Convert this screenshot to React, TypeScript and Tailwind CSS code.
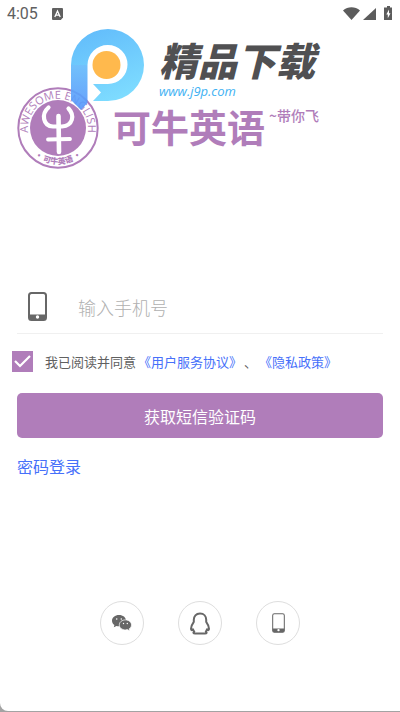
import { useState } from "react";

const PURPLE = "#b07dba";

function StatusBar() {
  return (
    <header className="flex h-7 items-center justify-between px-[7px] text-[#606060]">
      <div className="flex items-center gap-[14px]">
        <span className="font-[Roboto,sans-serif] text-[16px] leading-7">4:05</span>
        <svg width="11" height="12" viewBox="0 0 11 12" aria-hidden="true">
          <path d="M1 0h9A1 1 0 0 1 11 1V9.500L8.800 12H1A1 1 0 0 1 0 11V1A1 1 0 0 1 1 0z" fill="#606060" />
          <path d="M2.800 9 5.500 3l2.700 6M4 7.200h3" fill="none" stroke="#fff" strokeWidth="1.300" />
        </svg>
      </div>
      <svg width="50" height="16" viewBox="0 0 50 16" fill="#5c5c5c" aria-hidden="true">
        <path d="M0 4.500C5 .3 12 .3 17 4.500L8.500 14z" />
        <path d="M33 2v12H20z" />
        <path d="M44 0h3v1.500h2V14h-8V1.500h3z" />
        <path d="M46 3.500 43.300 8.500h1.500v3.800l2.700-5h-1.500z" fill="#fff" />
      </svg>
    </header>
  );
}

function Badge() {
  return (
    <svg width="82" height="82" viewBox="0 0 82 82" aria-hidden="true">
      <defs>
        <path id="badge-top" d="M12.500 51A30 30 0 1 1 69.500 51" />
        <path id="badge-bottom" d="M18 69A36.200 36.200 0 0 0 64 69" />
      </defs>
      <circle cx="41" cy="41" r="39.700" fill="#fff" stroke={PURPLE} strokeWidth="2" />
      <circle cx="41" cy="41" r="28" fill={PURPLE} />
      <text fill={PURPLE} fontSize="11" fontWeight="500" className="font-['Open_Sans',sans-serif]">
        <textPath href="#badge-top" startOffset="50%" textAnchor="middle">AWESOME ENGLISH</textPath>
      </text>
      <text fill={PURPLE} fontSize="8" fontWeight="900" className="font-['Noto_Sans_CJK_SC',sans-serif]">
        <textPath href="#badge-bottom" startOffset="50%" textAnchor="middle">· 可牛英语 ·</textPath>
      </text>
      <g fill="none" stroke="#fff" strokeLinecap="round" strokeLinejoin="round">
        <path d="M31.500 20.500C24 27 26 39 36 39.500h9c11-1 13-11 6.500-18" strokeWidth="4.200" />
        <path d="M41.500 29 42 65" strokeWidth="4.600" />
        <path d="M31 52.500 53 52" strokeWidth="3.800" />
      </g>
    </svg>
  );
}

function Watermark() {
  return (
    <div className="pointer-events-none absolute left-[71px] top-px flex gap-[14px]">
      <svg width="74" height="83" viewBox="0 0 74 83" aria-hidden="true">
        <defs>
          <linearGradient id="loop" x1="0.200" y1="0" x2="0.600" y2="1">
            <stop offset="0" stopColor="#62bcfb" />
            <stop offset="1" stopColor="#7edcff" />
          </linearGradient>
          <linearGradient id="stem" x1="0" y1="0" x2="0" y2="1">
            <stop offset="0" stopColor="#62bafb" />
            <stop offset="1" stopColor="#5595fb" />
          </linearGradient>
        </defs>
        <circle cx="36.500" cy="36" r="21" fill="#fff" />
        <path d="M0 36A37 36 0 0 1 37 0A36 36 0 0 1 37 72H22L30 63.500L22 55H37A19.500 19.500 0 0 0 37 16A20 20 0 0 0 16.500 36z" fill="url(#loop)" />
        <path d="M0 36H16.500V74L10 81L0 71z" fill="url(#stem)" fillOpacity="0.900" />
        <circle cx="35.500" cy="36" r="14" fill="#ffb94d" />
      </svg>
      <div className="flex flex-col pt-2">
        <span className="font-['Noto_Sans_CJK_SC',sans-serif] text-[39px] font-black italic leading-[44px] text-[#505052]">
          精品下载
        </span>
        <span className="font-['Open_Sans',sans-serif] text-[13px] font-medium italic leading-5 text-[#3fb2f3]">
          www.j9p.com
        </span>
      </div>
    </div>
  );
}

function Brand() {
  return (
    <section className="relative pl-[17px] pt-[59px]">
      <div className="flex gap-[14px]">
        <Badge />
        <h1 className="flex items-start gap-1 pt-4 font-['Noto_Sans_CJK_SC',sans-serif] text-[#b07dba]">
          <span className="text-[38px] font-bold leading-[46px]">可牛英语</span>
          <small className="text-[14px] font-medium leading-6">~带你飞</small>
        </h1>
      </div>
      <Watermark />
    </section>
  );
}

function PhoneIcon({ className, thin }: { className: string; thin?: boolean }) {
  return (
    <svg className={className} viewBox="0 0 19 29" aria-hidden="true">
      <rect x="1" y="1" width="17" height="27" rx="2.500" fill="none" stroke="#676767" strokeWidth={thin ? 1.5 : 2} />
      <path d="M1 22.500h17v3.500a2 2 0 0 1-2 2H3a2 2 0 0 1-2-2z" fill="#676767" />
      <circle cx="9.500" cy="25" r="1.700" fill="#fff" />
    </svg>
  );
}

function WechatIcon() {
  return (
    <svg width="20" height="16" viewBox="0 0 20 16" fill="#676767" aria-hidden="true">
      <path d="M7 0C3 0 0 2.500 0 5.700c0 1.800 1 3.300 2.400 4.300L1.800 12.200 4.500 11c.8.200 1.600.3 2.500.3C11 11.300 14 9 14 5.700S11 0 7 0z" />
      <path d="M13.400 4.900c-3.500 0-6.100 2.200-6.100 5s2.600 5 6.100 5c.7 0 1.400-.1 2-.3L17.700 16l-.5-2.200c1.500-.9 2.300-2.300 2.300-3.900 0-2.800-2.600-5-6.100-5z" stroke="#fff" strokeWidth="0.700" />
      <g fill="#fff">
        <circle cx="4.700" cy="4" r="0.800" />
        <circle cx="9.300" cy="4" r="0.800" />
        <circle cx="11.500" cy="8.500" r="0.700" />
        <circle cx="15.300" cy="8.500" r="0.700" />
      </g>
    </svg>
  );
}

function QqIcon() {
  return (
    <svg width="20" height="23" viewBox="0 0 20 23" fill="none" stroke="#676767" strokeWidth="2" strokeLinejoin="round" strokeLinecap="round" aria-hidden="true">
      <path d="M10 1.500C6 1.500 3.800 4.300 3.800 7.800v2C2.200 12 1 14.700 1 16.800c0 1.600.8 1.800 2 .4.200 1 .7 1.700 1.300 2.400-1.600.9-1 2 .8 2H15c1.800 0 2.300-1.100.8-2 .6-.7 1-1.400 1.200-2.400 1.200 1.400 2 1.200 2-.4 0-2.100-1.200-4.800-2.800-7v-2C16.200 4.300 14 1.500 10 1.500z" />
    </svg>
  );
}

const roundButton = "flex size-11 items-center justify-center rounded-full border border-[#dedede]";

export default function App() {
  const [agreed, setAgreed] = useState(true);
  const [phone, setPhone] = useState("");

  return (
    <div className="flex min-h-screen flex-col bg-[#a3a3a3] pb-px font-['Noto_Sans_CJK_SC',sans-serif]">
      <main className="flex grow flex-col rounded-bl-lg bg-white">
        <StatusBar />
        <Brand />

        <form className="flex flex-col px-[17px] pt-[111px]" onSubmit={(e) => e.preventDefault()}>
          <div className="flex h-[54px] items-center border-b border-[#f0f0f0] pl-[11px]">
            <label htmlFor="phone" aria-label="手机号">
              <PhoneIcon className="h-[29px] w-[19px]" />
            </label>
            <input
              id="phone"
              type="tel"
              value={phone}
              onChange={(e) => setPhone(e.target.value)}
              placeholder="输入手机号"
              className="ml-[31px] min-w-0 grow text-[18px] leading-7 font-light text-[#606060] outline-none placeholder:text-[#b0b0b0]"
            />
          </div>

          <div className="-ml-[5px] mt-[17px] flex h-[21px] items-center gap-3">
            <span className="relative flex size-[21px]">
              <input
                id="agree"
                type="checkbox"
                checked={agreed}
                onChange={(e) => setAgreed(e.target.checked)}
                className="peer size-[21px] appearance-none border border-[#b07dba] checked:bg-[#b07dba]"
              />
              <svg className="pointer-events-none absolute inset-0 hidden peer-checked:block" viewBox="0 0 21 21" fill="none" stroke="#fff" strokeWidth="2.200" aria-hidden="true">
                <path d="M3 10 8 15 18 5" />
              </svg>
            </span>
            <div className="flex gap-0.5 text-[13px] leading-5 text-[#606060]">
              <label htmlFor="agree">我已阅读并同意</label>
              <a href="#terms" className="text-[#4670fa]">《用户服务协议》</a>
              <span>、</span>
              <a href="#privacy" className="text-[#4670fa]">《隐私政策》</a>
            </div>
          </div>

          <button type="submit" className="mt-[21px] h-[45px] rounded-[5px] bg-[#b07dba] text-[16px] text-white">
            获取短信验证码
          </button>
          <a href="#password" className="mt-4 self-start text-[16px] leading-6 text-[#4670fa]">
            密码登录
          </a>
        </form>

        <nav className="mt-auto flex justify-center gap-[34px] pb-[66px] pt-8">
          <button type="button" aria-label="微信" className={roundButton}>
            <WechatIcon />
          </button>
          <button type="button" aria-label="QQ" className={roundButton}>
            <QqIcon />
          </button>
          <button type="button" aria-label="手机" className={roundButton}>
            <PhoneIcon className="h-5 w-[13px]" thin />
          </button>
        </nav>
      </main>
    </div>
  );
}
